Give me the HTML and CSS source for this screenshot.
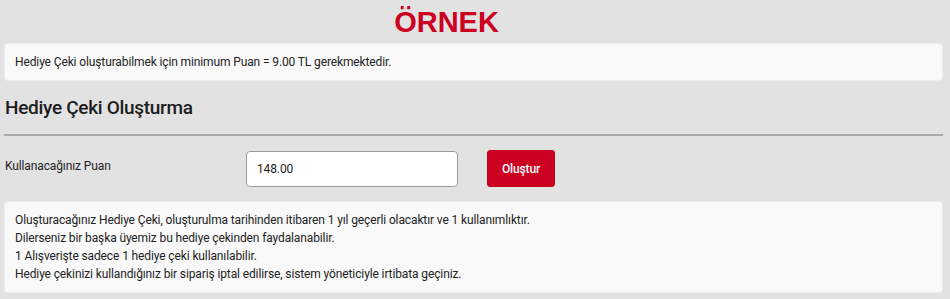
FILE: index.html
```html
<!DOCTYPE html>
<html lang="tr">
<head>
    <meta charset="UTF-8">
    <meta name="viewport" content="width=device-width, initial-scale=1.0">
    <title>Hediye Çeki Oluşturma</title>
    <link rel="stylesheet" href="styles.css">
</head>
<body>
    <div class="page">
        <div class="sample">ÖRNEK</div>

        <div class="note">
            Hediye Çeki oluşturabilmek için minimum Puan = 9.00 TL gerekmektedir.
        </div>

        <h2>Hediye Çeki Oluşturma</h2>
        <hr>

        <form class="coupon-form" onsubmit="return false;">
            <label for="points">Kullanacağınız Puan</label>
            <input type="text" id="points" value="148.00">
            <button type="submit" class="btn-create">Oluştur</button>
        </form>

        <div class="note note-list">
            <p>Oluşturacağınız Hediye Çeki, oluşturulma tarihinden itibaren 1 yıl geçerli olacaktır ve 1 kullanımlıktır.</p>
            <p>Dilerseniz bir başka üyemiz bu hediye çekinden faydalanabilir.</p>
            <p>1 Alışverişte sadece 1 hediye çeki kullanılabilir.</p>
            <p>Hediye çekinizi kullandığınız bir sipariş iptal edilirse, sistem yöneticiyle irtibata geçiniz.</p>
        </div>
    </div>
</body>
</html>
```

FILE: styles.css
```css
html, body { margin: 0; padding: 0; background: #e2e2e2; }
body { font-family: Roboto, "Liberation Sans", Arial, sans-serif; font-size: 12px; letter-spacing: -0.12px; line-height: 18px; color: #222; }
.page { padding: 0 7px 0 4px; }
.sample { font-family: "Liberation Sans", Arial, sans-serif; font-weight: bold; font-size: 29px; letter-spacing: 0; line-height: 36px; color: #cc0020; text-align: center; padding: 4px 54px 0 0; }
.note { margin-top: 3px; background: #f9f9f9; border: 1px solid #ececec; border-radius: 4px; padding: 9px 10px; }
.note p { margin: 0; }
h2 { margin: 15px 0 0 1px; font-size: 19px; letter-spacing: -0.3px; line-height: 24px; font-weight: 500; color: #1c1c1c; }
hr { margin: 14px 0 0; border: 0; height: 2px; background: #a9a9a9; }
.coupon-form { display: flex; align-items: flex-start; margin-top: 14px; }
.coupon-form label { width: 242px; padding: 7px 0 0 1px; box-sizing: border-box; }
.coupon-form input { margin-top: 1px; width: 212px; height: 36px; box-sizing: border-box; border: 1px solid #9a9a9a; border-radius: 4px; background: #fff; padding: 0 10px; font-family: inherit; font-size: 12px; letter-spacing: -0.12px; color: #222; }
.btn-create { margin-left: 29px; width: 68px; height: 37px; border: 1px solid #c4001c; border-radius: 3px; background: #cc0020; color: #fff; font-family: inherit; font-size: 12px; letter-spacing: -0.12px; font-weight: 500; padding: 0; }
.note-list { margin-top: 14px; }
```
